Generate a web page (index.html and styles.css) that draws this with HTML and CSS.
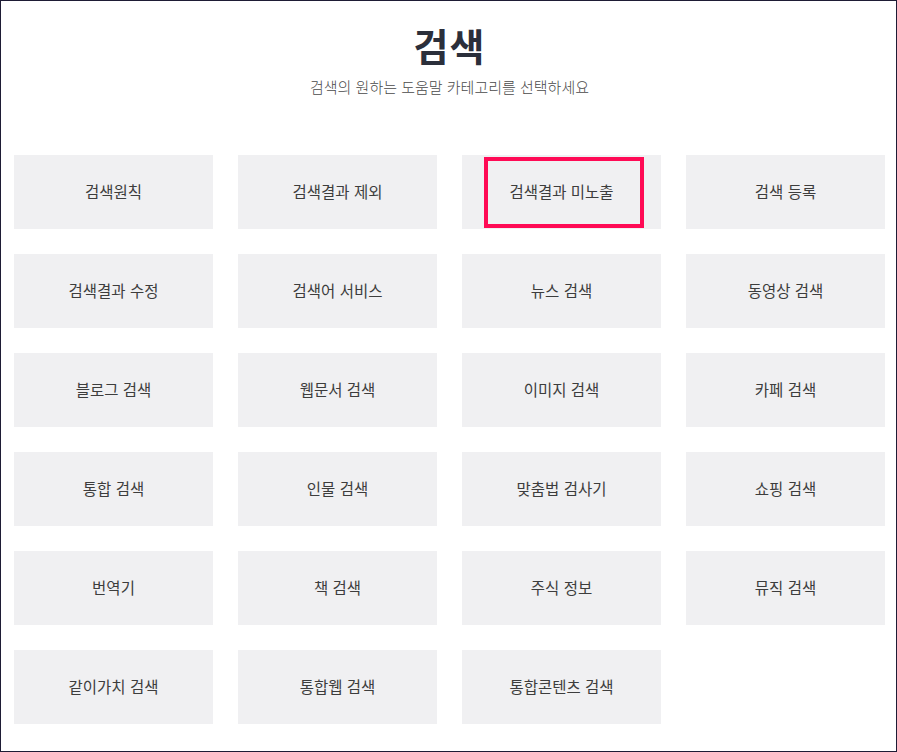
FILE: index.html
```html
<!DOCTYPE html>
<html lang="ko">
<head>
<meta charset="utf-8">
<link rel="stylesheet" href="styles.css">
</head>
<body>
<div class="frame">
  <header class="head">
    <h1 class="title">검색</h1>
    <p class="sub">검색의 원하는 도움말 카테고리를 선택하세요</p>
  </header>
  <div class="grid">
    <div class="tile">검색원칙</div>
    <div class="tile">검색결과 제외</div>
    <div class="tile mark">검색결과 미노출<span class="ring"></span></div>
    <div class="tile">검색 등록</div>
    <div class="tile">검색결과 수정</div>
    <div class="tile">검색어 서비스</div>
    <div class="tile">뉴스 검색</div>
    <div class="tile">동영상 검색</div>
    <div class="tile">블로그 검색</div>
    <div class="tile">웹문서 검색</div>
    <div class="tile">이미지 검색</div>
    <div class="tile">카페 검색</div>
    <div class="tile">통합 검색</div>
    <div class="tile">인물 검색</div>
    <div class="tile">맞춤법 검사기</div>
    <div class="tile">쇼핑 검색</div>
    <div class="tile">번역기</div>
    <div class="tile">책 검색</div>
    <div class="tile">주식 정보</div>
    <div class="tile">뮤직 검색</div>
    <div class="tile">같이가치 검색</div>
    <div class="tile">통합웹 검색</div>
    <div class="tile">통합콘텐츠 검색</div>
  </div>
</div>
</body>
</html>
```
FILE: styles.css
```css
* { box-sizing: border-box; }
html, body { margin: 0; padding: 0; background: #fff; }
body {
  font-family: "Noto Sans CJK KR", "Noto Sans", sans-serif;
  color: #333;
}
.frame {
  width: 897px;
  height: 752px;
  border: 1px solid #1e1c35;
  padding: 0 11px 0 13px;
}
.head {
  text-align: center;
  padding-top: 18px;
  height: 154px;
}
.title {
  margin: 0;
  font-size: 38px;
  font-weight: 700;
  line-height: 52px;
  color: #2b2f3b;
  letter-spacing: 1px;
}
.sub {
  margin: 6px 0 0;
  font-size: 15px;
  line-height: 20px;
  color: #4a4a4a;
  font-weight: 300;
}
.grid {
  display: grid;
  grid-template-columns: repeat(4, 199px);
  grid-auto-rows: 74px;
  column-gap: 25px;
  row-gap: 25px;
}
.tile {
  position: relative;
  background: #f0f0f2;
  display: flex;
  align-items: center;
  justify-content: center;
  font-size: 15.5px;
  color: #3d3d3d;
  padding-bottom: 3px;
}
.ring {
  position: absolute;
  left: 22px;
  top: 2px;
  width: 160px;
  height: 71px;
  border: 4px solid #ff0a55;
}
```
